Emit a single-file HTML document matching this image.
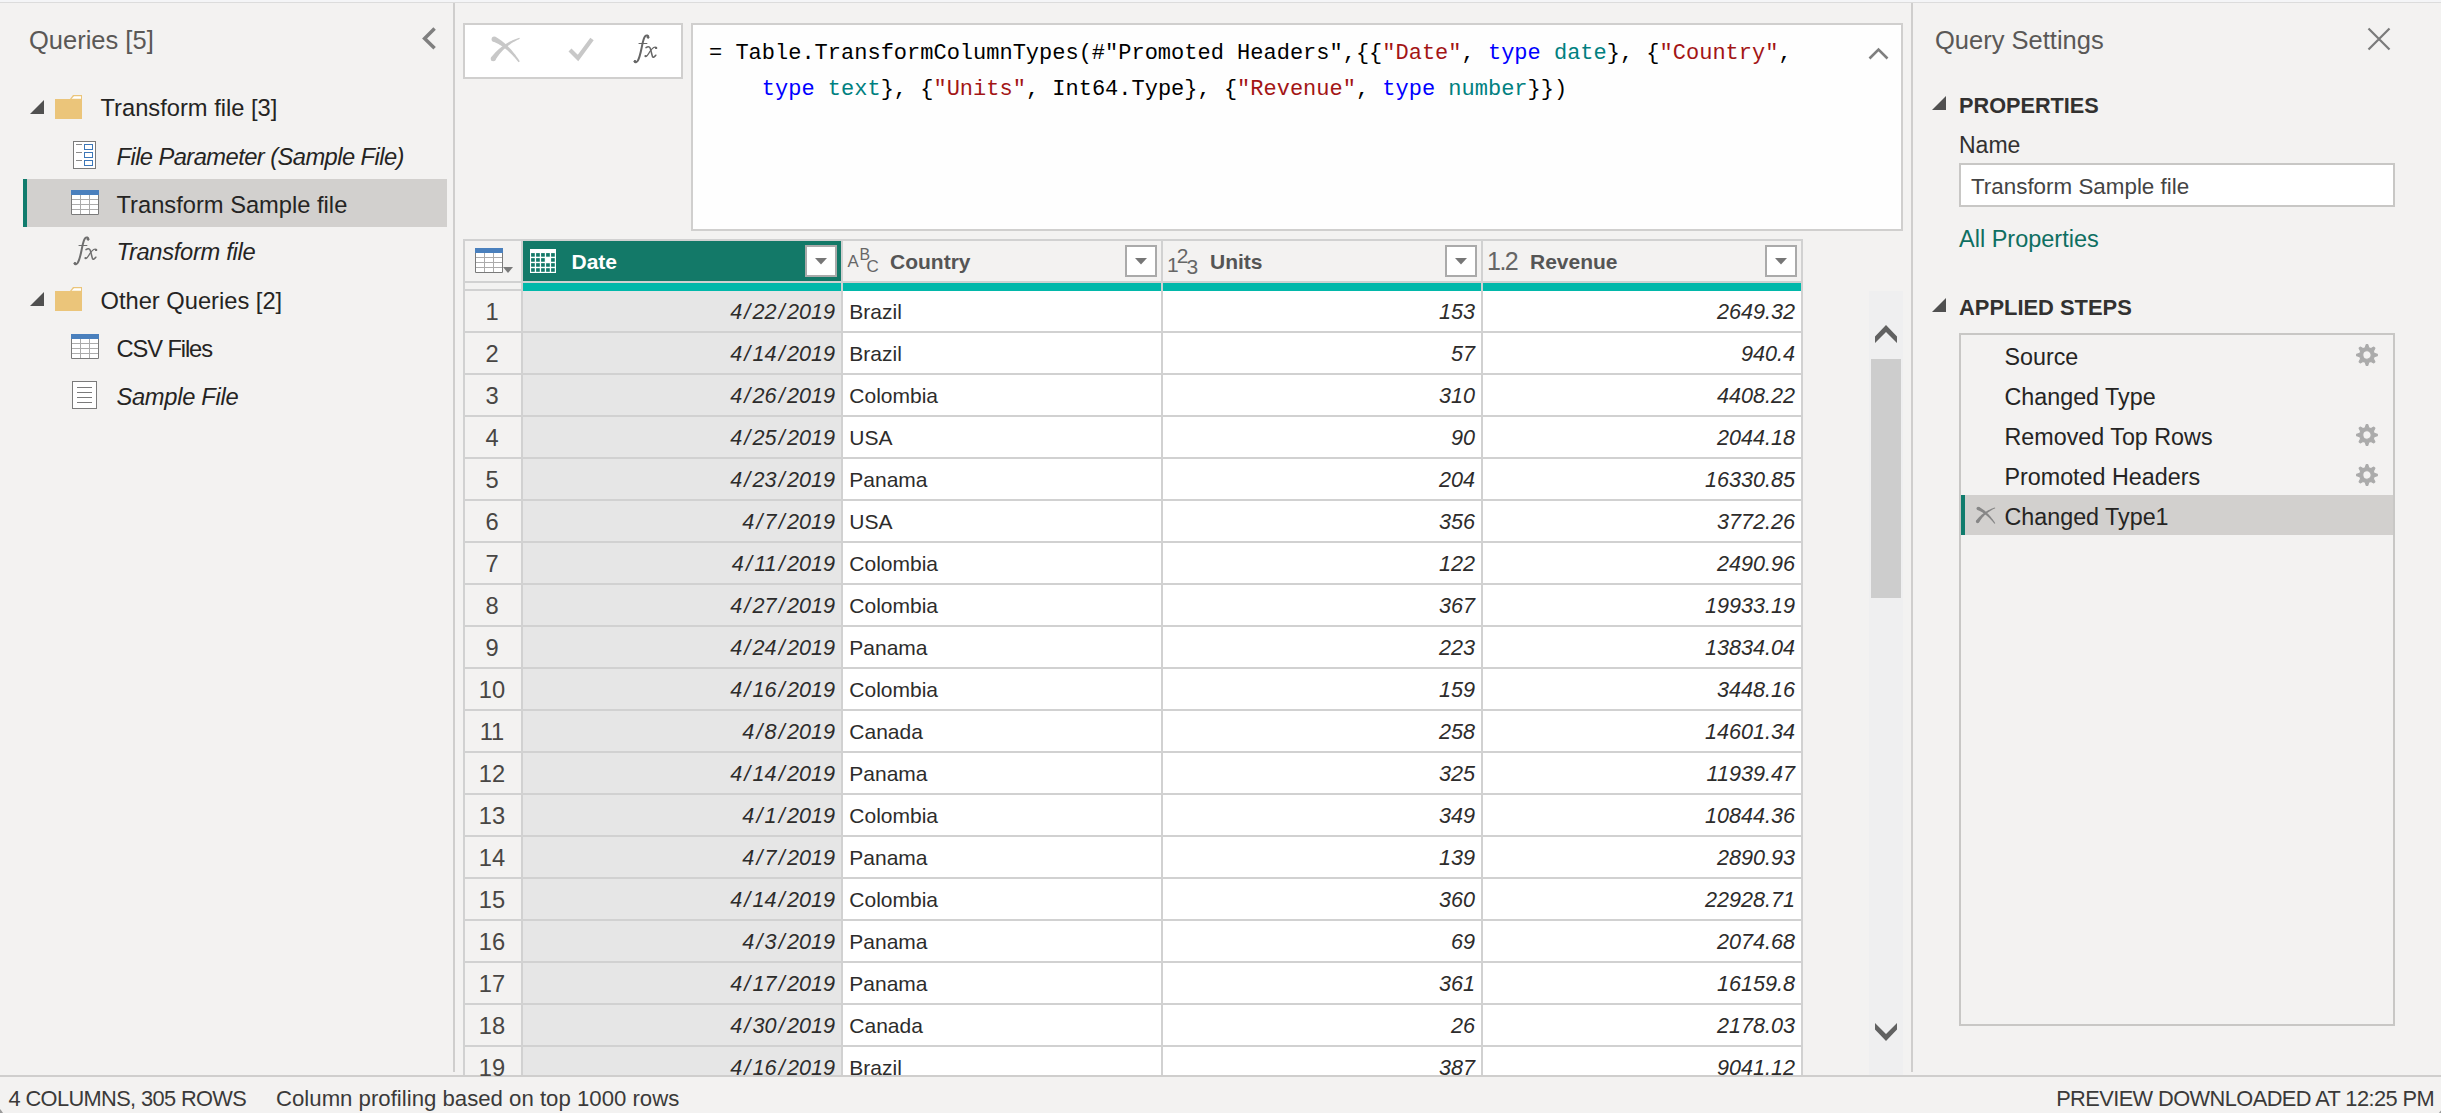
<!DOCTYPE html>
<html><head><meta charset="utf-8"><style>
html,body{margin:0;padding:0;}
body{width:2441px;height:1113px;position:relative;overflow:hidden;background:#f3f2f1;font-family:"Liberation Sans",sans-serif;}
.t{position:absolute;white-space:pre;}
.s{color:#a31515} .k{color:#0000ff} .ty{color:#008080}
svg{overflow:visible}
</style></head><body>
<div style="position:absolute;left:0px;top:0px;width:2441px;height:2px;background:#f4f5f7"></div>
<div style="position:absolute;left:0px;top:2px;width:2441px;height:1px;background:#dcdcdc"></div>
<div style="position:absolute;left:453px;top:3px;width:2px;height:1069px;background:#cfcecd"></div>
<div style="position:absolute;left:1911px;top:3px;width:2px;height:1069px;background:#cfcecd"></div>
<div style="position:absolute;left:0px;top:1075px;width:2441px;height:2px;background:#cfcecd"></div>
<div class="t" style="left:29.00px;top:28.01px;font-size:25.5px;line-height:25.5px;font-family:'Liberation Sans';font-weight:400;font-style:normal;color:#5a5856;font-weight:300;">Queries [5]</div>
<svg style="position:absolute;left:415px;top:22px" width="30" height="34" viewBox="415 22 30 34"><polyline points="434.6,28.6 424.6,38.4 434.6,48.2" fill="none" stroke="#7f7f7f" stroke-width="3.5"/></svg>
<div style="position:absolute;left:23px;top:179px;width:424px;height:48px;background:#d2d0ce"></div>
<div style="position:absolute;left:23px;top:179px;width:4px;height:48px;background:#107c6d"></div>
<svg style="position:absolute;left:30px;top:100px" width="14" height="14"><polygon points="14,0 14,14 0,14" fill="#505050"/></svg>
<svg style="position:absolute;left:55px;top:95px" width="28" height="24" viewBox="0 0 28 24"><path d="M0,4 L15,4 L18,0 L27,0 L27,24 L0,24 Z" fill="#ebc57a"/><path d="M16.5,3.8 L19,1.2 L26,1.2 L26,3.8 Z" fill="#ffffff"/></svg>
<div class="t" style="left:100.50px;top:97.44px;font-size:23.7px;line-height:23.7px;font-family:'Liberation Sans';font-weight:400;font-style:normal;color:#252423;">Transform file [3]</div>
<svg style="position:absolute;left:73px;top:141px" width="23" height="28" viewBox="0 0 23 28"><rect x="0.5" y="0.5" width="22" height="27" fill="#fff" stroke="#7a7a7a" stroke-width="1"/><path d="M3,3.5 H9 M3,11.5 H9 M3,19.5 H9" stroke="#8a8a8a" stroke-width="1"/><rect x="11.5" y="3.5" width="8" height="5" fill="none" stroke="#3c77b8" stroke-width="1"/><rect x="11.5" y="11.5" width="8" height="5" fill="none" stroke="#3c77b8" stroke-width="1"/><rect x="11.5" y="19.5" width="8" height="5" fill="none" stroke="#3c77b8" stroke-width="1"/></svg>
<div class="t" style="left:116.50px;top:145.94px;font-size:23.7px;line-height:23.7px;font-family:'Liberation Sans';font-weight:400;font-style:italic;color:#252423;letter-spacing:-0.55px;">File Parameter (Sample File)</div>
<svg style="position:absolute;left:71px;top:190px" width="28" height="25" viewBox="0 0 28 25"><rect x="0" y="0" width="28" height="25" fill="#fff"/><path d="M9.5,5 V24 M18.5,5 V24 M1,9.5 H27 M1,14.5 H27 M1,19.5 H27" stroke="#ababab" stroke-width="1"/><path d="M0.5,5 V24.5 H27.5 V5" fill="none" stroke="#7a7a7a" stroke-width="1"/><rect x="0" y="0" width="28" height="5" fill="#4a80bd"/></svg>
<div class="t" style="left:116.50px;top:193.54px;font-size:23.7px;line-height:23.7px;font-family:'Liberation Sans';font-weight:400;font-style:normal;color:#252423;">Transform Sample file</div>
<svg style="position:absolute;left:68.3px;top:232.1px" width="36" height="38" viewBox="0 0 36 38"><g fill="none" stroke="#6e6e6e" stroke-linecap="round"><path d="M20.3,7.4 C20.6,5.6 18.6,4.6 17,6.4 C15.3,8.6 14.6,13 13.6,18 C12.6,23 11.6,28 9.6,31 C8.6,32.4 7.2,32.8 6.6,31.6" stroke-width="2.0"/><path d="M11,13.5 H18.9" stroke-width="1.1"/><path d="M18,17.6 C19.5,16.6 21.2,16 22,17.8 C23,20 23.6,24.2 24.6,26.9 C25.2,28 26.4,27 27.8,25.2" stroke-width="1.5"/><path d="M28.3,17.6 C26.8,16.2 24.8,17.6 22.2,21.2 C20.2,24.2 19,26.8 17.8,26.4" stroke-width="1.2"/></g><g fill="#6e6e6e"><circle cx="20" cy="7.2" r="1.25"/><circle cx="7" cy="31.2" r="1.25"/><circle cx="28.1" cy="17.9" r="1.2"/><circle cx="17.6" cy="26.1" r="1.2"/></g></svg>
<div class="t" style="left:116.50px;top:241.44px;font-size:23.7px;line-height:23.7px;font-family:'Liberation Sans';font-weight:400;font-style:italic;color:#252423;letter-spacing:-0.3px;">Transform file</div>
<svg style="position:absolute;left:30px;top:292px" width="14" height="14"><polygon points="14,0 14,14 0,14" fill="#505050"/></svg>
<svg style="position:absolute;left:55px;top:287px" width="28" height="24" viewBox="0 0 28 24"><path d="M0,4 L15,4 L18,0 L27,0 L27,24 L0,24 Z" fill="#ebc57a"/><path d="M16.5,3.8 L19,1.2 L26,1.2 L26,3.8 Z" fill="#ffffff"/></svg>
<div class="t" style="left:100.50px;top:290.24px;font-size:23.7px;line-height:23.7px;font-family:'Liberation Sans';font-weight:400;font-style:normal;color:#252423;">Other Queries [2]</div>
<svg style="position:absolute;left:71px;top:334px" width="28" height="25" viewBox="0 0 28 25"><rect x="0" y="0" width="28" height="25" fill="#fff"/><path d="M9.5,5 V24 M18.5,5 V24 M1,9.5 H27 M1,14.5 H27 M1,19.5 H27" stroke="#ababab" stroke-width="1"/><path d="M0.5,5 V24.5 H27.5 V5" fill="none" stroke="#7a7a7a" stroke-width="1"/><rect x="0" y="0" width="28" height="5" fill="#4a80bd"/></svg>
<div class="t" style="left:116.50px;top:337.54px;font-size:23.7px;line-height:23.7px;font-family:'Liberation Sans';font-weight:400;font-style:normal;color:#252423;letter-spacing:-1.1px;">CSV Files</div>
<svg style="position:absolute;left:72px;top:381px" width="25" height="28" viewBox="0 0 25 28"><rect x="0.5" y="0.5" width="24" height="27" fill="#fff" stroke="#7a7a7a" stroke-width="1"/><path d="M5,6.5 H20 M5,11.5 H20 M5,16.5 H20 M5,21.5 H20" stroke="#7a7a7a" stroke-width="1"/></svg>
<div class="t" style="left:116.50px;top:385.54px;font-size:23.7px;line-height:23.7px;font-family:'Liberation Sans';font-weight:400;font-style:italic;color:#252423;letter-spacing:-0.3px;">Sample File</div>
<div style="position:absolute;left:463px;top:23px;width:220px;height:56px;background:#fff;border:2px solid #d0cfce;box-sizing:border-box"></div>
<svg style="position:absolute;left:0;top:0" width="1" height="1"><g fill="#c8c8c8"><path d="M493.12,41.56 L494.19,41.99 L495.26,42.45 L496.33,42.96 L497.40,43.49 L498.48,44.07 L499.55,44.68 L500.62,45.33 L501.69,46.02 L502.76,46.75 L503.83,47.52 L504.89,48.32 L505.96,49.16 L507.02,50.04 L508.09,50.96 L509.14,51.92 L510.20,52.91 L511.26,53.95 L512.31,55.02 L513.36,56.13 L514.40,57.28 L515.44,58.47 L516.48,59.70 L517.52,60.96 L518.55,62.26 L519.85,61.34 L518.93,59.93 L518.00,58.55 L517.06,57.21 L516.11,55.90 L515.16,54.62 L514.19,53.38 L513.22,52.17 L512.24,51.00 L511.26,49.86 L510.26,48.75 L509.25,47.68 L508.24,46.64 L507.22,45.63 L506.18,44.66 L505.14,43.73 L504.09,42.82 L503.03,41.95 L501.95,41.12 L500.87,40.32 L499.77,39.55 L498.67,38.82 L497.55,38.12 L496.42,37.46 L495.28,36.84 Z"/><path d="M519.39,37.74 L517.98,38.20 L516.58,38.69 L515.21,39.22 L513.85,39.77 L512.52,40.35 L511.21,40.97 L509.91,41.61 L508.64,42.29 L507.39,42.99 L506.15,43.73 L504.94,44.50 L503.75,45.30 L502.58,46.13 L501.43,47.00 L500.30,47.89 L499.20,48.82 L498.11,49.78 L497.05,50.77 L496.01,51.79 L494.99,52.85 L493.99,53.94 L493.02,55.06 L492.07,56.21 L491.14,57.39 L495.26,60.21 L495.99,59.04 L496.74,57.89 L497.52,56.77 L498.32,55.67 L499.15,54.59 L500.00,53.54 L500.88,52.51 L501.78,51.51 L502.71,50.53 L503.66,49.58 L504.64,48.65 L505.65,47.75 L506.68,46.87 L507.74,46.02 L508.83,45.19 L509.94,44.38 L511.08,43.60 L512.24,42.85 L513.44,42.12 L514.66,41.42 L515.90,40.74 L517.18,40.09 L518.48,39.46 L519.81,38.86 Z"/><circle cx="494.2" cy="39.2" r="2.6"/><circle cx="493.2" cy="58.8" r="2.5"/></g></svg>
<svg style="position:absolute;left:566px;top:35px" width="30" height="28" viewBox="0 0 30 28"><polyline points="4,15 12,23 26,4" fill="none" stroke="#c8c8c8" stroke-width="4.2"/></svg>
<svg style="position:absolute;left:628px;top:30px" width="36" height="38" viewBox="0 0 36 38"><g fill="none" stroke="#666666" stroke-linecap="round"><path d="M20.3,7.4 C20.6,5.6 18.6,4.6 17,6.4 C15.3,8.6 14.6,13 13.6,18 C12.6,23 11.6,28 9.6,31 C8.6,32.4 7.2,32.8 6.6,31.6" stroke-width="2.0"/><path d="M11,13.5 H18.9" stroke-width="1.1"/><path d="M18,17.6 C19.5,16.6 21.2,16 22,17.8 C23,20 23.6,24.2 24.6,26.9 C25.2,28 26.4,27 27.8,25.2" stroke-width="1.5"/><path d="M28.3,17.6 C26.8,16.2 24.8,17.6 22.2,21.2 C20.2,24.2 19,26.8 17.8,26.4" stroke-width="1.2"/></g><g fill="#666666"><circle cx="20" cy="7.2" r="1.25"/><circle cx="7" cy="31.2" r="1.25"/><circle cx="28.1" cy="17.9" r="1.2"/><circle cx="17.6" cy="26.1" r="1.2"/></g></svg>
<div style="position:absolute;left:691px;top:23px;width:1212px;height:208px;background:#fefefe;border:2px solid #d0cfce;box-sizing:border-box"></div>
<div class="t" style="left:709.00px;top:43.34px;font-size:22px;line-height:22px;font-family:'Liberation Mono';font-weight:400;font-style:normal;color:#000000;white-space:pre;">= Table.TransformColumnTypes(#"Promoted Headers",{{<span class="s">"Date"</span>, <span class="k">type</span> <span class="ty">date</span>}, {<span class="s">"Country"</span>,</div>
<div class="t" style="left:709.00px;top:79.34px;font-size:22px;line-height:22px;font-family:'Liberation Mono';font-weight:400;font-style:normal;color:#000000;white-space:pre;">    <span class="k">type</span> <span class="ty">text</span>}, {<span class="s">"Units"</span>, Int64.Type}, {<span class="s">"Revenue"</span>, <span class="k">type</span> <span class="ty">number</span>}})</div>
<svg style="position:absolute;left:1864px;top:40px" width="30" height="24" viewBox="1864 40 30 24"><polyline points="1869.5,58.5 1878.5,49.5 1887.5,58.5" fill="none" stroke="#7f7f7f" stroke-width="2.6"/></svg>
<div style="position:absolute;left:463px;top:239px;width:1340px;height:2px;background:#d1d1d1"></div>
<div style="position:absolute;left:465px;top:241px;width:56px;height:40px;background:#f3f2f1"></div>
<div style="position:absolute;left:523px;top:241px;width:318px;height:40px;background:#137968"></div>
<div style="position:absolute;left:843px;top:241px;width:318px;height:40px;background:#f3f2f1"></div>
<div style="position:absolute;left:1163px;top:241px;width:318px;height:40px;background:#f3f2f1"></div>
<div style="position:absolute;left:1483px;top:241px;width:318px;height:40px;background:#f3f2f1"></div>
<div style="position:absolute;left:463px;top:281px;width:1340px;height:2px;background:#d1d1d1"></div>
<div style="position:absolute;left:465px;top:283px;width:56px;height:6px;background:#f3f2f1"></div>
<div style="position:absolute;left:465px;top:289px;width:56px;height:2px;background:#d1d1d1"></div>
<div style="position:absolute;left:523px;top:283px;width:1278px;height:8px;background:#01b8aa"></div>
<div style="position:absolute;left:465px;top:291px;width:56px;height:784px;background:#f3f2f1"></div>
<div style="position:absolute;left:523px;top:291px;width:318px;height:784px;background:#e6e6e6"></div>
<div style="position:absolute;left:843px;top:291px;width:958px;height:784px;background:#ffffff"></div>
<div style="position:absolute;left:463px;top:239px;width:2px;height:836px;background:#d1d1d1"></div>
<div style="position:absolute;left:521px;top:239px;width:2px;height:836px;background:#d1d1d1"></div>
<div style="position:absolute;left:841px;top:239px;width:2px;height:836px;background:#d1d1d1"></div>
<div style="position:absolute;left:1161px;top:239px;width:2px;height:836px;background:#d1d1d1"></div>
<div style="position:absolute;left:1481px;top:239px;width:2px;height:836px;background:#d1d1d1"></div>
<div style="position:absolute;left:1801px;top:239px;width:2px;height:836px;background:#d1d1d1"></div>
<div style="position:absolute;left:463px;top:331px;width:1340px;height:2px;background:#d1d1d1"></div>
<div class="t" style="left:492.00px;top:300.94px;font-size:23.7px;line-height:23.7px;font-family:'Liberation Sans';font-weight:400;font-style:normal;color:#484644;width:0;display:flex;justify-content:center;">1</div>
<div class="t" style="right:1606.00px;top:300.72px;font-size:21.6px;line-height:21.6px;font-family:'Liberation Sans';font-weight:400;font-style:italic;color:#2d2c2b;">4<span style="margin:0 2.2px">/</span>22<span style="margin:0 2.2px">/</span>2019</div>
<div class="t" style="left:849.30px;top:301.22px;font-size:21px;line-height:21px;font-family:'Liberation Sans';font-weight:400;font-style:normal;color:#2d2c2b;">Brazil</div>
<div class="t" style="right:966.00px;top:300.72px;font-size:21.6px;line-height:21.6px;font-family:'Liberation Sans';font-weight:400;font-style:italic;color:#2d2c2b;">153</div>
<div class="t" style="right:646.00px;top:300.72px;font-size:21.6px;line-height:21.6px;font-family:'Liberation Sans';font-weight:400;font-style:italic;color:#2d2c2b;">2649.32</div>
<div style="position:absolute;left:463px;top:373px;width:1340px;height:2px;background:#d1d1d1"></div>
<div class="t" style="left:492.00px;top:342.94px;font-size:23.7px;line-height:23.7px;font-family:'Liberation Sans';font-weight:400;font-style:normal;color:#484644;width:0;display:flex;justify-content:center;">2</div>
<div class="t" style="right:1606.00px;top:342.72px;font-size:21.6px;line-height:21.6px;font-family:'Liberation Sans';font-weight:400;font-style:italic;color:#2d2c2b;">4<span style="margin:0 2.2px">/</span>14<span style="margin:0 2.2px">/</span>2019</div>
<div class="t" style="left:849.30px;top:343.22px;font-size:21px;line-height:21px;font-family:'Liberation Sans';font-weight:400;font-style:normal;color:#2d2c2b;">Brazil</div>
<div class="t" style="right:966.00px;top:342.72px;font-size:21.6px;line-height:21.6px;font-family:'Liberation Sans';font-weight:400;font-style:italic;color:#2d2c2b;">57</div>
<div class="t" style="right:646.00px;top:342.72px;font-size:21.6px;line-height:21.6px;font-family:'Liberation Sans';font-weight:400;font-style:italic;color:#2d2c2b;">940.4</div>
<div style="position:absolute;left:463px;top:415px;width:1340px;height:2px;background:#d1d1d1"></div>
<div class="t" style="left:492.00px;top:384.94px;font-size:23.7px;line-height:23.7px;font-family:'Liberation Sans';font-weight:400;font-style:normal;color:#484644;width:0;display:flex;justify-content:center;">3</div>
<div class="t" style="right:1606.00px;top:384.72px;font-size:21.6px;line-height:21.6px;font-family:'Liberation Sans';font-weight:400;font-style:italic;color:#2d2c2b;">4<span style="margin:0 2.2px">/</span>26<span style="margin:0 2.2px">/</span>2019</div>
<div class="t" style="left:849.30px;top:385.22px;font-size:21px;line-height:21px;font-family:'Liberation Sans';font-weight:400;font-style:normal;color:#2d2c2b;">Colombia</div>
<div class="t" style="right:966.00px;top:384.72px;font-size:21.6px;line-height:21.6px;font-family:'Liberation Sans';font-weight:400;font-style:italic;color:#2d2c2b;">310</div>
<div class="t" style="right:646.00px;top:384.72px;font-size:21.6px;line-height:21.6px;font-family:'Liberation Sans';font-weight:400;font-style:italic;color:#2d2c2b;">4408.22</div>
<div style="position:absolute;left:463px;top:457px;width:1340px;height:2px;background:#d1d1d1"></div>
<div class="t" style="left:492.00px;top:426.94px;font-size:23.7px;line-height:23.7px;font-family:'Liberation Sans';font-weight:400;font-style:normal;color:#484644;width:0;display:flex;justify-content:center;">4</div>
<div class="t" style="right:1606.00px;top:426.72px;font-size:21.6px;line-height:21.6px;font-family:'Liberation Sans';font-weight:400;font-style:italic;color:#2d2c2b;">4<span style="margin:0 2.2px">/</span>25<span style="margin:0 2.2px">/</span>2019</div>
<div class="t" style="left:849.30px;top:427.22px;font-size:21px;line-height:21px;font-family:'Liberation Sans';font-weight:400;font-style:normal;color:#2d2c2b;">USA</div>
<div class="t" style="right:966.00px;top:426.72px;font-size:21.6px;line-height:21.6px;font-family:'Liberation Sans';font-weight:400;font-style:italic;color:#2d2c2b;">90</div>
<div class="t" style="right:646.00px;top:426.72px;font-size:21.6px;line-height:21.6px;font-family:'Liberation Sans';font-weight:400;font-style:italic;color:#2d2c2b;">2044.18</div>
<div style="position:absolute;left:463px;top:499px;width:1340px;height:2px;background:#d1d1d1"></div>
<div class="t" style="left:492.00px;top:468.94px;font-size:23.7px;line-height:23.7px;font-family:'Liberation Sans';font-weight:400;font-style:normal;color:#484644;width:0;display:flex;justify-content:center;">5</div>
<div class="t" style="right:1606.00px;top:468.72px;font-size:21.6px;line-height:21.6px;font-family:'Liberation Sans';font-weight:400;font-style:italic;color:#2d2c2b;">4<span style="margin:0 2.2px">/</span>23<span style="margin:0 2.2px">/</span>2019</div>
<div class="t" style="left:849.30px;top:469.22px;font-size:21px;line-height:21px;font-family:'Liberation Sans';font-weight:400;font-style:normal;color:#2d2c2b;">Panama</div>
<div class="t" style="right:966.00px;top:468.72px;font-size:21.6px;line-height:21.6px;font-family:'Liberation Sans';font-weight:400;font-style:italic;color:#2d2c2b;">204</div>
<div class="t" style="right:646.00px;top:468.72px;font-size:21.6px;line-height:21.6px;font-family:'Liberation Sans';font-weight:400;font-style:italic;color:#2d2c2b;">16330.85</div>
<div style="position:absolute;left:463px;top:541px;width:1340px;height:2px;background:#d1d1d1"></div>
<div class="t" style="left:492.00px;top:510.94px;font-size:23.7px;line-height:23.7px;font-family:'Liberation Sans';font-weight:400;font-style:normal;color:#484644;width:0;display:flex;justify-content:center;">6</div>
<div class="t" style="right:1606.00px;top:510.72px;font-size:21.6px;line-height:21.6px;font-family:'Liberation Sans';font-weight:400;font-style:italic;color:#2d2c2b;">4<span style="margin:0 2.2px">/</span>7<span style="margin:0 2.2px">/</span>2019</div>
<div class="t" style="left:849.30px;top:511.22px;font-size:21px;line-height:21px;font-family:'Liberation Sans';font-weight:400;font-style:normal;color:#2d2c2b;">USA</div>
<div class="t" style="right:966.00px;top:510.72px;font-size:21.6px;line-height:21.6px;font-family:'Liberation Sans';font-weight:400;font-style:italic;color:#2d2c2b;">356</div>
<div class="t" style="right:646.00px;top:510.72px;font-size:21.6px;line-height:21.6px;font-family:'Liberation Sans';font-weight:400;font-style:italic;color:#2d2c2b;">3772.26</div>
<div style="position:absolute;left:463px;top:583px;width:1340px;height:2px;background:#d1d1d1"></div>
<div class="t" style="left:492.00px;top:552.94px;font-size:23.7px;line-height:23.7px;font-family:'Liberation Sans';font-weight:400;font-style:normal;color:#484644;width:0;display:flex;justify-content:center;">7</div>
<div class="t" style="right:1606.00px;top:552.72px;font-size:21.6px;line-height:21.6px;font-family:'Liberation Sans';font-weight:400;font-style:italic;color:#2d2c2b;">4<span style="margin:0 2.2px">/</span>11<span style="margin:0 2.2px">/</span>2019</div>
<div class="t" style="left:849.30px;top:553.22px;font-size:21px;line-height:21px;font-family:'Liberation Sans';font-weight:400;font-style:normal;color:#2d2c2b;">Colombia</div>
<div class="t" style="right:966.00px;top:552.72px;font-size:21.6px;line-height:21.6px;font-family:'Liberation Sans';font-weight:400;font-style:italic;color:#2d2c2b;">122</div>
<div class="t" style="right:646.00px;top:552.72px;font-size:21.6px;line-height:21.6px;font-family:'Liberation Sans';font-weight:400;font-style:italic;color:#2d2c2b;">2490.96</div>
<div style="position:absolute;left:463px;top:625px;width:1340px;height:2px;background:#d1d1d1"></div>
<div class="t" style="left:492.00px;top:594.94px;font-size:23.7px;line-height:23.7px;font-family:'Liberation Sans';font-weight:400;font-style:normal;color:#484644;width:0;display:flex;justify-content:center;">8</div>
<div class="t" style="right:1606.00px;top:594.72px;font-size:21.6px;line-height:21.6px;font-family:'Liberation Sans';font-weight:400;font-style:italic;color:#2d2c2b;">4<span style="margin:0 2.2px">/</span>27<span style="margin:0 2.2px">/</span>2019</div>
<div class="t" style="left:849.30px;top:595.22px;font-size:21px;line-height:21px;font-family:'Liberation Sans';font-weight:400;font-style:normal;color:#2d2c2b;">Colombia</div>
<div class="t" style="right:966.00px;top:594.72px;font-size:21.6px;line-height:21.6px;font-family:'Liberation Sans';font-weight:400;font-style:italic;color:#2d2c2b;">367</div>
<div class="t" style="right:646.00px;top:594.72px;font-size:21.6px;line-height:21.6px;font-family:'Liberation Sans';font-weight:400;font-style:italic;color:#2d2c2b;">19933.19</div>
<div style="position:absolute;left:463px;top:667px;width:1340px;height:2px;background:#d1d1d1"></div>
<div class="t" style="left:492.00px;top:636.94px;font-size:23.7px;line-height:23.7px;font-family:'Liberation Sans';font-weight:400;font-style:normal;color:#484644;width:0;display:flex;justify-content:center;">9</div>
<div class="t" style="right:1606.00px;top:636.72px;font-size:21.6px;line-height:21.6px;font-family:'Liberation Sans';font-weight:400;font-style:italic;color:#2d2c2b;">4<span style="margin:0 2.2px">/</span>24<span style="margin:0 2.2px">/</span>2019</div>
<div class="t" style="left:849.30px;top:637.22px;font-size:21px;line-height:21px;font-family:'Liberation Sans';font-weight:400;font-style:normal;color:#2d2c2b;">Panama</div>
<div class="t" style="right:966.00px;top:636.72px;font-size:21.6px;line-height:21.6px;font-family:'Liberation Sans';font-weight:400;font-style:italic;color:#2d2c2b;">223</div>
<div class="t" style="right:646.00px;top:636.72px;font-size:21.6px;line-height:21.6px;font-family:'Liberation Sans';font-weight:400;font-style:italic;color:#2d2c2b;">13834.04</div>
<div style="position:absolute;left:463px;top:709px;width:1340px;height:2px;background:#d1d1d1"></div>
<div class="t" style="left:492.00px;top:678.94px;font-size:23.7px;line-height:23.7px;font-family:'Liberation Sans';font-weight:400;font-style:normal;color:#484644;width:0;display:flex;justify-content:center;">10</div>
<div class="t" style="right:1606.00px;top:678.72px;font-size:21.6px;line-height:21.6px;font-family:'Liberation Sans';font-weight:400;font-style:italic;color:#2d2c2b;">4<span style="margin:0 2.2px">/</span>16<span style="margin:0 2.2px">/</span>2019</div>
<div class="t" style="left:849.30px;top:679.22px;font-size:21px;line-height:21px;font-family:'Liberation Sans';font-weight:400;font-style:normal;color:#2d2c2b;">Colombia</div>
<div class="t" style="right:966.00px;top:678.72px;font-size:21.6px;line-height:21.6px;font-family:'Liberation Sans';font-weight:400;font-style:italic;color:#2d2c2b;">159</div>
<div class="t" style="right:646.00px;top:678.72px;font-size:21.6px;line-height:21.6px;font-family:'Liberation Sans';font-weight:400;font-style:italic;color:#2d2c2b;">3448.16</div>
<div style="position:absolute;left:463px;top:751px;width:1340px;height:2px;background:#d1d1d1"></div>
<div class="t" style="left:492.00px;top:720.94px;font-size:23.7px;line-height:23.7px;font-family:'Liberation Sans';font-weight:400;font-style:normal;color:#484644;width:0;display:flex;justify-content:center;">11</div>
<div class="t" style="right:1606.00px;top:720.72px;font-size:21.6px;line-height:21.6px;font-family:'Liberation Sans';font-weight:400;font-style:italic;color:#2d2c2b;">4<span style="margin:0 2.2px">/</span>8<span style="margin:0 2.2px">/</span>2019</div>
<div class="t" style="left:849.30px;top:721.22px;font-size:21px;line-height:21px;font-family:'Liberation Sans';font-weight:400;font-style:normal;color:#2d2c2b;">Canada</div>
<div class="t" style="right:966.00px;top:720.72px;font-size:21.6px;line-height:21.6px;font-family:'Liberation Sans';font-weight:400;font-style:italic;color:#2d2c2b;">258</div>
<div class="t" style="right:646.00px;top:720.72px;font-size:21.6px;line-height:21.6px;font-family:'Liberation Sans';font-weight:400;font-style:italic;color:#2d2c2b;">14601.34</div>
<div style="position:absolute;left:463px;top:793px;width:1340px;height:2px;background:#d1d1d1"></div>
<div class="t" style="left:492.00px;top:762.94px;font-size:23.7px;line-height:23.7px;font-family:'Liberation Sans';font-weight:400;font-style:normal;color:#484644;width:0;display:flex;justify-content:center;">12</div>
<div class="t" style="right:1606.00px;top:762.72px;font-size:21.6px;line-height:21.6px;font-family:'Liberation Sans';font-weight:400;font-style:italic;color:#2d2c2b;">4<span style="margin:0 2.2px">/</span>14<span style="margin:0 2.2px">/</span>2019</div>
<div class="t" style="left:849.30px;top:763.22px;font-size:21px;line-height:21px;font-family:'Liberation Sans';font-weight:400;font-style:normal;color:#2d2c2b;">Panama</div>
<div class="t" style="right:966.00px;top:762.72px;font-size:21.6px;line-height:21.6px;font-family:'Liberation Sans';font-weight:400;font-style:italic;color:#2d2c2b;">325</div>
<div class="t" style="right:646.00px;top:762.72px;font-size:21.6px;line-height:21.6px;font-family:'Liberation Sans';font-weight:400;font-style:italic;color:#2d2c2b;">11939.47</div>
<div style="position:absolute;left:463px;top:835px;width:1340px;height:2px;background:#d1d1d1"></div>
<div class="t" style="left:492.00px;top:804.94px;font-size:23.7px;line-height:23.7px;font-family:'Liberation Sans';font-weight:400;font-style:normal;color:#484644;width:0;display:flex;justify-content:center;">13</div>
<div class="t" style="right:1606.00px;top:804.72px;font-size:21.6px;line-height:21.6px;font-family:'Liberation Sans';font-weight:400;font-style:italic;color:#2d2c2b;">4<span style="margin:0 2.2px">/</span>1<span style="margin:0 2.2px">/</span>2019</div>
<div class="t" style="left:849.30px;top:805.22px;font-size:21px;line-height:21px;font-family:'Liberation Sans';font-weight:400;font-style:normal;color:#2d2c2b;">Colombia</div>
<div class="t" style="right:966.00px;top:804.72px;font-size:21.6px;line-height:21.6px;font-family:'Liberation Sans';font-weight:400;font-style:italic;color:#2d2c2b;">349</div>
<div class="t" style="right:646.00px;top:804.72px;font-size:21.6px;line-height:21.6px;font-family:'Liberation Sans';font-weight:400;font-style:italic;color:#2d2c2b;">10844.36</div>
<div style="position:absolute;left:463px;top:877px;width:1340px;height:2px;background:#d1d1d1"></div>
<div class="t" style="left:492.00px;top:846.94px;font-size:23.7px;line-height:23.7px;font-family:'Liberation Sans';font-weight:400;font-style:normal;color:#484644;width:0;display:flex;justify-content:center;">14</div>
<div class="t" style="right:1606.00px;top:846.72px;font-size:21.6px;line-height:21.6px;font-family:'Liberation Sans';font-weight:400;font-style:italic;color:#2d2c2b;">4<span style="margin:0 2.2px">/</span>7<span style="margin:0 2.2px">/</span>2019</div>
<div class="t" style="left:849.30px;top:847.22px;font-size:21px;line-height:21px;font-family:'Liberation Sans';font-weight:400;font-style:normal;color:#2d2c2b;">Panama</div>
<div class="t" style="right:966.00px;top:846.72px;font-size:21.6px;line-height:21.6px;font-family:'Liberation Sans';font-weight:400;font-style:italic;color:#2d2c2b;">139</div>
<div class="t" style="right:646.00px;top:846.72px;font-size:21.6px;line-height:21.6px;font-family:'Liberation Sans';font-weight:400;font-style:italic;color:#2d2c2b;">2890.93</div>
<div style="position:absolute;left:463px;top:919px;width:1340px;height:2px;background:#d1d1d1"></div>
<div class="t" style="left:492.00px;top:888.94px;font-size:23.7px;line-height:23.7px;font-family:'Liberation Sans';font-weight:400;font-style:normal;color:#484644;width:0;display:flex;justify-content:center;">15</div>
<div class="t" style="right:1606.00px;top:888.72px;font-size:21.6px;line-height:21.6px;font-family:'Liberation Sans';font-weight:400;font-style:italic;color:#2d2c2b;">4<span style="margin:0 2.2px">/</span>14<span style="margin:0 2.2px">/</span>2019</div>
<div class="t" style="left:849.30px;top:889.22px;font-size:21px;line-height:21px;font-family:'Liberation Sans';font-weight:400;font-style:normal;color:#2d2c2b;">Colombia</div>
<div class="t" style="right:966.00px;top:888.72px;font-size:21.6px;line-height:21.6px;font-family:'Liberation Sans';font-weight:400;font-style:italic;color:#2d2c2b;">360</div>
<div class="t" style="right:646.00px;top:888.72px;font-size:21.6px;line-height:21.6px;font-family:'Liberation Sans';font-weight:400;font-style:italic;color:#2d2c2b;">22928.71</div>
<div style="position:absolute;left:463px;top:961px;width:1340px;height:2px;background:#d1d1d1"></div>
<div class="t" style="left:492.00px;top:930.94px;font-size:23.7px;line-height:23.7px;font-family:'Liberation Sans';font-weight:400;font-style:normal;color:#484644;width:0;display:flex;justify-content:center;">16</div>
<div class="t" style="right:1606.00px;top:930.72px;font-size:21.6px;line-height:21.6px;font-family:'Liberation Sans';font-weight:400;font-style:italic;color:#2d2c2b;">4<span style="margin:0 2.2px">/</span>3<span style="margin:0 2.2px">/</span>2019</div>
<div class="t" style="left:849.30px;top:931.22px;font-size:21px;line-height:21px;font-family:'Liberation Sans';font-weight:400;font-style:normal;color:#2d2c2b;">Panama</div>
<div class="t" style="right:966.00px;top:930.72px;font-size:21.6px;line-height:21.6px;font-family:'Liberation Sans';font-weight:400;font-style:italic;color:#2d2c2b;">69</div>
<div class="t" style="right:646.00px;top:930.72px;font-size:21.6px;line-height:21.6px;font-family:'Liberation Sans';font-weight:400;font-style:italic;color:#2d2c2b;">2074.68</div>
<div style="position:absolute;left:463px;top:1003px;width:1340px;height:2px;background:#d1d1d1"></div>
<div class="t" style="left:492.00px;top:972.94px;font-size:23.7px;line-height:23.7px;font-family:'Liberation Sans';font-weight:400;font-style:normal;color:#484644;width:0;display:flex;justify-content:center;">17</div>
<div class="t" style="right:1606.00px;top:972.72px;font-size:21.6px;line-height:21.6px;font-family:'Liberation Sans';font-weight:400;font-style:italic;color:#2d2c2b;">4<span style="margin:0 2.2px">/</span>17<span style="margin:0 2.2px">/</span>2019</div>
<div class="t" style="left:849.30px;top:973.22px;font-size:21px;line-height:21px;font-family:'Liberation Sans';font-weight:400;font-style:normal;color:#2d2c2b;">Panama</div>
<div class="t" style="right:966.00px;top:972.72px;font-size:21.6px;line-height:21.6px;font-family:'Liberation Sans';font-weight:400;font-style:italic;color:#2d2c2b;">361</div>
<div class="t" style="right:646.00px;top:972.72px;font-size:21.6px;line-height:21.6px;font-family:'Liberation Sans';font-weight:400;font-style:italic;color:#2d2c2b;">16159.8</div>
<div style="position:absolute;left:463px;top:1045px;width:1340px;height:2px;background:#d1d1d1"></div>
<div class="t" style="left:492.00px;top:1014.94px;font-size:23.7px;line-height:23.7px;font-family:'Liberation Sans';font-weight:400;font-style:normal;color:#484644;width:0;display:flex;justify-content:center;">18</div>
<div class="t" style="right:1606.00px;top:1014.72px;font-size:21.6px;line-height:21.6px;font-family:'Liberation Sans';font-weight:400;font-style:italic;color:#2d2c2b;">4<span style="margin:0 2.2px">/</span>30<span style="margin:0 2.2px">/</span>2019</div>
<div class="t" style="left:849.30px;top:1015.22px;font-size:21px;line-height:21px;font-family:'Liberation Sans';font-weight:400;font-style:normal;color:#2d2c2b;">Canada</div>
<div class="t" style="right:966.00px;top:1014.72px;font-size:21.6px;line-height:21.6px;font-family:'Liberation Sans';font-weight:400;font-style:italic;color:#2d2c2b;">26</div>
<div class="t" style="right:646.00px;top:1014.72px;font-size:21.6px;line-height:21.6px;font-family:'Liberation Sans';font-weight:400;font-style:italic;color:#2d2c2b;">2178.03</div>
<div class="t" style="left:492.00px;top:1056.94px;font-size:23.7px;line-height:23.7px;font-family:'Liberation Sans';font-weight:400;font-style:normal;color:#484644;width:0;display:flex;justify-content:center;">19</div>
<div class="t" style="right:1606.00px;top:1056.72px;font-size:21.6px;line-height:21.6px;font-family:'Liberation Sans';font-weight:400;font-style:italic;color:#2d2c2b;">4<span style="margin:0 2.2px">/</span>16<span style="margin:0 2.2px">/</span>2019</div>
<div class="t" style="left:849.30px;top:1057.22px;font-size:21px;line-height:21px;font-family:'Liberation Sans';font-weight:400;font-style:normal;color:#2d2c2b;">Brazil</div>
<div class="t" style="right:966.00px;top:1056.72px;font-size:21.6px;line-height:21.6px;font-family:'Liberation Sans';font-weight:400;font-style:italic;color:#2d2c2b;">387</div>
<div class="t" style="right:646.00px;top:1056.72px;font-size:21.6px;line-height:21.6px;font-family:'Liberation Sans';font-weight:400;font-style:italic;color:#2d2c2b;">9041.12</div>
<svg style="position:absolute;left:475px;top:248px" width="28" height="25" viewBox="0 0 28 25"><rect x="0" y="0" width="28" height="25" fill="#fff"/><path d="M9.5,5 V24 M18.5,5 V24 M1,9.5 H27 M1,14.5 H27 M1,19.5 H27" stroke="#ababab" stroke-width="1"/><path d="M0.5,5 V24.5 H27.5 V5" fill="none" stroke="#7a7a7a" stroke-width="1"/><rect x="0" y="0" width="28" height="5" fill="#4a80bd"/></svg>
<svg style="position:absolute;left:503px;top:267px" width="11" height="7"><polygon points="0,0 10,0 5,6" fill="#7a7a7a"/></svg>
<svg style="position:absolute;left:530px;top:249px" width="26" height="24" viewBox="530 249 26 24"><rect x="530" y="249" width="26" height="24" fill="#fff"/><rect x="531.1" y="253.10" width="3.7" height="3.6" fill="#137968"/><rect x="531.1" y="258.13" width="3.7" height="3.6" fill="#137968"/><rect x="531.1" y="263.16" width="3.7" height="3.6" fill="#137968"/><rect x="531.1" y="268.19" width="3.7" height="3.6" fill="#137968"/><rect x="536.1" y="253.10" width="3.7" height="3.6" fill="#137968"/><rect x="536.1" y="258.13" width="3.7" height="3.6" fill="#137968"/><rect x="536.1" y="263.16" width="3.7" height="3.6" fill="#137968"/><rect x="536.1" y="268.19" width="3.7" height="3.6" fill="#137968"/><rect x="541.1" y="253.10" width="3.7" height="3.6" fill="#137968"/><rect x="541.1" y="258.13" width="3.7" height="3.6" fill="#137968"/><rect x="541.1" y="263.16" width="3.7" height="3.6" fill="#137968"/><rect x="541.1" y="268.19" width="3.7" height="3.6" fill="#137968"/><rect x="546.1" y="253.10" width="3.7" height="3.6" fill="#137968"/><rect x="546.1" y="258.13" width="3.7" height="3.6" fill="#137968"/><rect x="546.1" y="263.16" width="3.7" height="3.6" fill="#137968"/><rect x="546.1" y="268.19" width="3.7" height="3.6" fill="#137968"/><rect x="551.1" y="253.10" width="3.7" height="3.6" fill="#137968"/><rect x="551.1" y="258.13" width="3.7" height="3.6" fill="#137968"/><rect x="551.1" y="263.16" width="3.7" height="3.6" fill="#137968"/><rect x="551.1" y="268.19" width="3.7" height="3.6" fill="#137968"/><rect x="545.2" y="257" width="5.7" height="6.1" fill="#fff"/></svg>
<div class="t" style="left:571.50px;top:251.22px;font-size:21px;line-height:21px;font-family:'Liberation Sans';font-weight:700;font-style:normal;color:#ffffff;">Date</div>
<div style="position:absolute;left:805px;top:245px;width:32px;height:32px;background:#fff;border:2px solid #aaaaaa;box-sizing:border-box"></div>
<svg style="position:absolute;left:815px;top:258px" width="13" height="7"><polygon points="0,0 12,0 6,6.5" fill="#767676"/></svg>
<div style="position:absolute;left:1125px;top:245px;width:32px;height:32px;background:#fff;border:2px solid #aaaaaa;box-sizing:border-box"></div>
<svg style="position:absolute;left:1135px;top:258px" width="13" height="7"><polygon points="0,0 12,0 6,6.5" fill="#767676"/></svg>
<div style="position:absolute;left:1445px;top:245px;width:32px;height:32px;background:#fff;border:2px solid #aaaaaa;box-sizing:border-box"></div>
<svg style="position:absolute;left:1455px;top:258px" width="13" height="7"><polygon points="0,0 12,0 6,6.5" fill="#767676"/></svg>
<div style="position:absolute;left:1765px;top:245px;width:32px;height:32px;background:#fff;border:2px solid #aaaaaa;box-sizing:border-box"></div>
<svg style="position:absolute;left:1775px;top:258px" width="13" height="7"><polygon points="0,0 12,0 6,6.5" fill="#767676"/></svg>
<div class="t" style="left:847.50px;top:254.08px;font-size:16.8px;line-height:16.8px;font-family:'Liberation Sans';font-weight:400;font-style:normal;color:#666666;">A</div>
<div class="t" style="left:859.60px;top:247.43px;font-size:15.8px;line-height:15.8px;font-family:'Liberation Sans';font-weight:400;font-style:normal;color:#666666;">B</div>
<div class="t" style="left:866.50px;top:258.11px;font-size:17px;line-height:17px;font-family:'Liberation Sans';font-weight:400;font-style:normal;color:#666666;">C</div>
<div class="t" style="left:890.00px;top:251.22px;font-size:21px;line-height:21px;font-family:'Liberation Sans';font-weight:700;font-style:normal;color:#555555;">Country</div>
<div class="t" style="left:1167.00px;top:254.22px;font-size:21px;line-height:21px;font-family:'Liberation Sans';font-weight:400;font-style:normal;color:#666666;letter-spacing:0">1</div>
<div class="t" style="left:1176.80px;top:245.22px;font-size:21px;line-height:21px;font-family:'Liberation Sans';font-weight:400;font-style:normal;color:#666666;">2</div>
<div class="t" style="left:1186.50px;top:255.62px;font-size:21px;line-height:21px;font-family:'Liberation Sans';font-weight:400;font-style:normal;color:#666666;">3</div>
<div class="t" style="left:1210.00px;top:251.22px;font-size:21px;line-height:21px;font-family:'Liberation Sans';font-weight:700;font-style:normal;color:#555555;">Units</div>
<div class="t" style="left:1487.00px;top:248.84px;font-size:25px;line-height:25px;font-family:'Liberation Sans';font-weight:400;font-style:normal;color:#666666;letter-spacing:-1.5px;">1.2</div>
<div class="t" style="left:1530.00px;top:251.22px;font-size:21px;line-height:21px;font-family:'Liberation Sans';font-weight:700;font-style:normal;color:#555555;">Revenue</div>
<div style="position:absolute;left:1869px;top:291px;width:34px;height:784px;background:#efeff0"></div>
<svg style="position:absolute;left:1872px;top:322px" width="28" height="24" viewBox="1872 322 28 24"><polygon points="1875,336.5 1886,325 1897,336.5 1897,343 1886,332 1875,343" fill="#616161"/></svg>
<div style="position:absolute;left:1871px;top:359px;width:30px;height:239px;background:#cdcdcd"></div>
<svg style="position:absolute;left:1872px;top:1020px" width="28" height="24" viewBox="1872 1020 28 24"><polygon points="1875,1023 1886,1034 1897,1023 1897,1029.5 1886,1041 1875,1029.5" fill="#616161"/></svg>
<div class="t" style="left:1935.00px;top:28.01px;font-size:25.5px;line-height:25.5px;font-family:'Liberation Sans';font-weight:400;font-style:normal;color:#5a5856;font-weight:300;">Query Settings</div>
<svg style="position:absolute;left:2364px;top:24px" width="30" height="30" viewBox="2364 24 30 30"><path d="M2368.5,28.5 L2389.5,49.5 M2389.5,28.5 L2368.5,49.5" stroke="#7a7a7a" stroke-width="2.2"/></svg>
<svg style="position:absolute;left:1932px;top:96px" width="14" height="14"><polygon points="14,0 14,14 0,14" fill="#505050"/></svg>
<div class="t" style="left:1959.00px;top:95.43px;font-size:21.7px;line-height:21.7px;font-family:'Liberation Sans';font-weight:700;font-style:normal;color:#323130;">PROPERTIES</div>
<div class="t" style="left:1959.00px;top:134.13px;font-size:23px;line-height:23px;font-family:'Liberation Sans';font-weight:400;font-style:normal;color:#323130;">Name</div>
<div style="position:absolute;left:1959px;top:163px;width:436px;height:44px;background:#fff;border:2px solid #c8c7c5;box-sizing:border-box"></div>
<div class="t" style="left:1971.00px;top:175.84px;font-size:22.4px;line-height:22.4px;font-family:'Liberation Sans';font-weight:400;font-style:normal;color:#444444;font-weight:300;">Transform Sample file</div>
<div class="t" style="left:1959.00px;top:228.11px;font-size:23.5px;line-height:23.5px;font-family:'Liberation Sans';font-weight:400;font-style:normal;color:#0e6f61;">All Properties</div>
<svg style="position:absolute;left:1932px;top:298px" width="14" height="14"><polygon points="14,0 14,14 0,14" fill="#505050"/></svg>
<div class="t" style="left:1959.00px;top:297.26px;font-size:21.9px;line-height:21.9px;font-family:'Liberation Sans';font-weight:700;font-style:normal;color:#323130;">APPLIED STEPS</div>
<div style="position:absolute;left:1959px;top:333px;width:436px;height:693px;border:2px solid #c8c7c5;box-sizing:border-box"></div>
<div style="position:absolute;left:1961px;top:495px;width:432px;height:40px;background:#d2d0ce"></div>
<div style="position:absolute;left:1961px;top:495px;width:4px;height:40px;background:#107c6d"></div>
<svg style="position:absolute;left:0;top:0" width="1" height="1"><g transform="translate(1975.9,506.2) scale(0.665) translate(-490.7,-35.8)" fill="#878787"><path d="M493.12,41.56 L494.19,41.99 L495.26,42.45 L496.33,42.96 L497.40,43.49 L498.48,44.07 L499.55,44.68 L500.62,45.33 L501.69,46.02 L502.76,46.75 L503.83,47.52 L504.89,48.32 L505.96,49.16 L507.02,50.04 L508.09,50.96 L509.14,51.92 L510.20,52.91 L511.26,53.95 L512.31,55.02 L513.36,56.13 L514.40,57.28 L515.44,58.47 L516.48,59.70 L517.52,60.96 L518.55,62.26 L519.85,61.34 L518.93,59.93 L518.00,58.55 L517.06,57.21 L516.11,55.90 L515.16,54.62 L514.19,53.38 L513.22,52.17 L512.24,51.00 L511.26,49.86 L510.26,48.75 L509.25,47.68 L508.24,46.64 L507.22,45.63 L506.18,44.66 L505.14,43.73 L504.09,42.82 L503.03,41.95 L501.95,41.12 L500.87,40.32 L499.77,39.55 L498.67,38.82 L497.55,38.12 L496.42,37.46 L495.28,36.84 Z"/><path d="M519.39,37.74 L517.98,38.20 L516.58,38.69 L515.21,39.22 L513.85,39.77 L512.52,40.35 L511.21,40.97 L509.91,41.61 L508.64,42.29 L507.39,42.99 L506.15,43.73 L504.94,44.50 L503.75,45.30 L502.58,46.13 L501.43,47.00 L500.30,47.89 L499.20,48.82 L498.11,49.78 L497.05,50.77 L496.01,51.79 L494.99,52.85 L493.99,53.94 L493.02,55.06 L492.07,56.21 L491.14,57.39 L495.26,60.21 L495.99,59.04 L496.74,57.89 L497.52,56.77 L498.32,55.67 L499.15,54.59 L500.00,53.54 L500.88,52.51 L501.78,51.51 L502.71,50.53 L503.66,49.58 L504.64,48.65 L505.65,47.75 L506.68,46.87 L507.74,46.02 L508.83,45.19 L509.94,44.38 L511.08,43.60 L512.24,42.85 L513.44,42.12 L514.66,41.42 L515.90,40.74 L517.18,40.09 L518.48,39.46 L519.81,38.86 Z"/><circle cx="494.2" cy="39.2" r="2.6"/><circle cx="493.2" cy="58.8" r="2.5"/></g></svg>
<div class="t" style="left:2004.50px;top:346.28px;font-size:23.3px;line-height:23.3px;font-family:'Liberation Sans';font-weight:400;font-style:normal;color:#252423;">Source</div>
<div class="t" style="left:2004.50px;top:386.28px;font-size:23.3px;line-height:23.3px;font-family:'Liberation Sans';font-weight:400;font-style:normal;color:#252423;">Changed Type</div>
<div class="t" style="left:2004.50px;top:426.28px;font-size:23.3px;line-height:23.3px;font-family:'Liberation Sans';font-weight:400;font-style:normal;color:#252423;">Removed Top Rows</div>
<div class="t" style="left:2004.50px;top:466.28px;font-size:23.3px;line-height:23.3px;font-family:'Liberation Sans';font-weight:400;font-style:normal;color:#252423;">Promoted Headers</div>
<div class="t" style="left:2004.50px;top:506.28px;font-size:23.3px;line-height:23.3px;font-family:'Liberation Sans';font-weight:400;font-style:normal;color:#252423;">Changed Type1</div>
<svg style="position:absolute;left:0;top:0" width="1" height="1"><path fill="#ababab" fill-rule="evenodd" stroke="#ababab" stroke-width="1.1" stroke-linejoin="round" d="M2365.15,347.84 L2366.18,344.63 L2367.82,344.63 L2368.85,347.84 L2370.76,348.62 L2373.75,347.09 L2374.91,348.25 L2373.38,351.24 L2374.16,353.15 L2377.37,354.18 L2377.37,355.82 L2374.16,356.85 L2373.38,358.76 L2374.91,361.75 L2373.75,362.91 L2370.76,361.38 L2368.85,362.16 L2367.82,365.37 L2366.18,365.37 L2365.15,362.16 L2363.24,361.38 L2360.25,362.91 L2359.09,361.75 L2360.62,358.76 L2359.84,356.85 L2356.63,355.82 L2356.63,354.18 L2359.84,353.15 L2360.62,351.24 L2359.09,348.25 L2360.25,347.09 L2363.24,348.62 Z M2371.2,355 A4.2,4.2 0 1,0 2362.8,355 A4.2,4.2 0 1,0 2371.2,355 Z"/></svg>
<svg style="position:absolute;left:0;top:0" width="1" height="1"><path fill="#ababab" fill-rule="evenodd" stroke="#ababab" stroke-width="1.1" stroke-linejoin="round" d="M2365.15,427.84 L2366.18,424.63 L2367.82,424.63 L2368.85,427.84 L2370.76,428.62 L2373.75,427.09 L2374.91,428.25 L2373.38,431.24 L2374.16,433.15 L2377.37,434.18 L2377.37,435.82 L2374.16,436.85 L2373.38,438.76 L2374.91,441.75 L2373.75,442.91 L2370.76,441.38 L2368.85,442.16 L2367.82,445.37 L2366.18,445.37 L2365.15,442.16 L2363.24,441.38 L2360.25,442.91 L2359.09,441.75 L2360.62,438.76 L2359.84,436.85 L2356.63,435.82 L2356.63,434.18 L2359.84,433.15 L2360.62,431.24 L2359.09,428.25 L2360.25,427.09 L2363.24,428.62 Z M2371.2,435 A4.2,4.2 0 1,0 2362.8,435 A4.2,4.2 0 1,0 2371.2,435 Z"/></svg>
<svg style="position:absolute;left:0;top:0" width="1" height="1"><path fill="#ababab" fill-rule="evenodd" stroke="#ababab" stroke-width="1.1" stroke-linejoin="round" d="M2365.15,467.84 L2366.18,464.63 L2367.82,464.63 L2368.85,467.84 L2370.76,468.62 L2373.75,467.09 L2374.91,468.25 L2373.38,471.24 L2374.16,473.15 L2377.37,474.18 L2377.37,475.82 L2374.16,476.85 L2373.38,478.76 L2374.91,481.75 L2373.75,482.91 L2370.76,481.38 L2368.85,482.16 L2367.82,485.37 L2366.18,485.37 L2365.15,482.16 L2363.24,481.38 L2360.25,482.91 L2359.09,481.75 L2360.62,478.76 L2359.84,476.85 L2356.63,475.82 L2356.63,474.18 L2359.84,473.15 L2360.62,471.24 L2359.09,468.25 L2360.25,467.09 L2363.24,468.62 Z M2371.2,475 A4.2,4.2 0 1,0 2362.8,475 A4.2,4.2 0 1,0 2371.2,475 Z"/></svg>
<svg style="position:absolute;left:0;top:1106px" width="8" height="7" viewBox="0 1106 8 7"><path d="M0,1109 Q1.5,1110.5 3,1113 L0,1113 Z" fill="#9a9a9a"/></svg>
<svg style="position:absolute;left:2433px;top:1106px" width="8" height="7" viewBox="2433 1106 8 7"><path d="M2441,1110.5 Q2439.8,1111.8 2439,1113 L2441,1113 Z" fill="#9a9a9a"/></svg>
<div class="t" style="left:8.50px;top:1088.05px;font-size:21.8px;line-height:21.8px;font-family:'Liberation Sans';font-weight:400;font-style:normal;color:#3b3a39;letter-spacing:-0.62px;">4 COLUMNS, 305 ROWS</div>
<div class="t" style="left:276.00px;top:1087.71px;font-size:22.2px;line-height:22.2px;font-family:'Liberation Sans';font-weight:400;font-style:normal;color:#3b3a39;">Column profiling based on top 1000 rows</div>
<div class="t" style="right:7.00px;top:1088.35px;font-size:21.8px;line-height:21.8px;font-family:'Liberation Sans';font-weight:400;font-style:normal;color:#3b3a39;letter-spacing:-0.58px;">PREVIEW DOWNLOADED AT 12:25 PM</div>
</body></html>
